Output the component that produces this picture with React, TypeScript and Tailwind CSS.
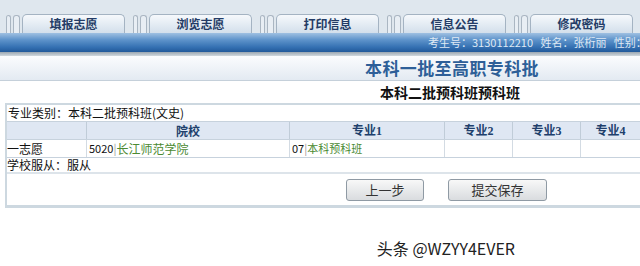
const tabs = ['填报志愿', '浏览志愿', '打印信息', '信息公告', '修改密码']

const cjk = { fontFamily: '"Noto Sans CJK SC", "Liberation Sans", sans-serif' }
const serif = { fontFamily: '"Liberation Serif", "Noto Sans CJK SC", serif' }

const Tab = ({ label }: { label: string }) => (
  <div className="flex h-full w-[127px] shrink-0 items-end">
    <div className="flex h-full w-[22px] items-end gap-[2px] pl-[6px]">
      <div className="h-[18px] w-[5px] rounded-t-[3px] border border-b-0 border-[#aab6c2] bg-[#e8eef4]" />
      <div className="h-[18px] w-[7px] rounded-t-[3px] border border-b-0 border-[#aab6c2] bg-[#e8eef4]" />
    </div>
    <div className="flex h-[19px] w-[103px] items-center justify-center rounded-t-[5px] border border-b-0 border-[#a4b3c2] bg-gradient-to-b from-[#f6f9fc] to-[#d3dfeb] text-[12px] font-bold text-[#243c66]">
      {label}
    </div>
  </div>
)

export default function App() {
  return (
    <div className="h-[266px] w-[640px] overflow-hidden bg-white text-[12px] text-[#111]" style={cjk}>
      <div className="h-[33px] bg-[#dfe7ee] pt-[14px]">
        <div className="flex h-[19px]">
          {tabs.map((t) => (
            <Tab key={t} label={t} />
          ))}
        </div>
      </div>
      <div className="flex h-[19px] items-center overflow-hidden whitespace-nowrap bg-[linear-gradient(to_bottom,#9fc0e2,#5f94cb_35%,#3470b2_75%,#22599a)] pl-[428px] text-[11px] text-[#dfe9f4]">
        <span className="shrink-0">考生号：3130112210&nbsp;&nbsp;&nbsp;姓名：张桁丽&nbsp;&nbsp;&nbsp;性别：女</span>
      </div>
      <div className="h-[4px] bg-[linear-gradient(to_bottom,#9aa6b1,#d1d8de)]" />
      <div className="flex h-[25px] items-center justify-end border-b border-[#c5d0da] bg-gradient-to-b from-[#fbfcfe] to-[#e3eaf2] pr-[101px]">
        <span className="text-[17px] font-bold tracking-[0.4px] text-[#2e5f98]">本科一批至高职专科批</span>
      </div>
      <div className="flex h-[22px] items-center justify-end pr-[120px]">
        <span className="text-[14px] font-bold text-[#111]">本科二批预科班预科班</span>
      </div>
      <div className="ml-[5px] border-b-[3px] border-l-2 border-t-2 border-[#cdd8e0] leading-none">
        <div className="flex h-[16px] items-center pl-[1px]">专业类别：本科二批预科班(文史)</div>
        <div className="grid grid-cols-[80px_203px_155px_68px_68px_1fr] border-y border-[#c7d2dd] bg-[#dfe7f3] text-[12px] font-bold text-[#203f6c]" style={serif}>
          <div className="h-[17px] border-r border-[#c0ccd8]" />
          <div className="flex h-[17px] items-center justify-center border-r border-[#c0ccd8]" style={cjk}>院校</div>
          {['专业1', '专业2', '专业3', '专业4'].map((h, i) => (
            <div
              key={h}
              className={`flex h-[17px] items-center justify-center ${i < 3 ? 'border-r border-[#c0ccd8]' : ''}`}
            >
              {h}
            </div>
          ))}
        </div>
        <div className="grid grid-cols-[80px_203px_155px_68px_68px_1fr] border-b border-[#c7d2dd]">
          <div className="flex h-[17px] items-center border-r border-[#d3dbe3] text-[12px]">一志愿</div>
          <div className="flex h-[17px] items-center border-r border-[#d3dbe3] pl-[2px] text-[11px]">
            5020<span className="text-[#999]">|</span>
            <span className="text-[12px] text-[#4b8a32]">长江师范学院</span>
          </div>
          <div className="flex h-[17px] items-center border-r border-[#d3dbe3] pl-[2px] text-[11px]">
            07<span className="text-[#999]">|</span>
            <span className="text-[11px] text-[#4b8a32]">本科预科班</span>
          </div>
          <div className="border-r border-[#d3dbe3]" />
          <div className="border-r border-[#d3dbe3]" />
          <div />
        </div>
        <div className="flex h-[16px] items-center border-b-2 border-[#dde4ea] text-[12px]">学校服从：服从</div>
        <div className="flex h-[31px] items-center gap-[24px] pl-[339px]">
          <button className="h-[22px] w-[78px] rounded-[3px] border border-[#8f9aa4] bg-gradient-to-b from-[#f8f8f8] to-[#d9dcdf] text-[13px] text-[#333]">
            上一步
          </button>
          <button className="h-[22px] w-[99px] rounded-[3px] border border-[#8f9aa4] bg-gradient-to-b from-[#f8f8f8] to-[#d9dcdf] text-[13px] text-[#333]">
            提交保存
          </button>
        </div>
      </div>
      <div className="flex justify-end pr-[125px] pt-[28px]">
        <span className="text-[16px] text-[#222] [text-shadow:1px_1px_0_#fff,-1px_-1px_0_#fff]">头条 @WZYY4EVER</span>
      </div>
    </div>
  )
}
